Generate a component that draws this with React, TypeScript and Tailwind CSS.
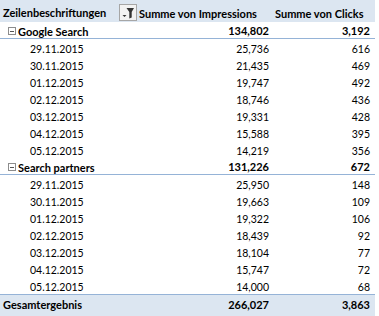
import React from 'react'

type Row = { date: string; imp: string; clicks: string }

const groups: { name: string; imp: string; clicks: string; rows: Row[] }[] = [
  {
    name: 'Google Search',
    imp: '134,802',
    clicks: '3,192',
    rows: [
      { date: '29.11.2015', imp: '25,736', clicks: '616' },
      { date: '30.11.2015', imp: '21,435', clicks: '469' },
      { date: '01.12.2015', imp: '19,747', clicks: '492' },
      { date: '02.12.2015', imp: '18,746', clicks: '436' },
      { date: '03.12.2015', imp: '19,331', clicks: '428' },
      { date: '04.12.2015', imp: '15,588', clicks: '395' },
      { date: '05.12.2015', imp: '14,219', clicks: '356' },
    ],
  },
  {
    name: 'Search partners',
    imp: '131,226',
    clicks: '672',
    rows: [
      { date: '29.11.2015', imp: '25,950', clicks: '148' },
      { date: '30.11.2015', imp: '19,663', clicks: '109' },
      { date: '01.12.2015', imp: '19,322', clicks: '106' },
      { date: '02.12.2015', imp: '18,439', clicks: '92' },
      { date: '03.12.2015', imp: '18,104', clicks: '77' },
      { date: '04.12.2015', imp: '15,747', clicks: '72' },
      { date: '05.12.2015', imp: '14,000', clicks: '68' },
    ],
  },
]

function FilterButton() {
  return (
    <div className="w-[18px] h-[17px] border border-[#a6a6a6] bg-[#f2f2f2] flex items-center justify-center">
      <svg width="16" height="15" viewBox="0 0 16 15">
        <polygon points="6.5,3 14,3 11.7,7 11.7,12.5 9.3,13.5 9.3,7" fill="#333" />
        <polygon points="2.5,10 6.5,10 4.5,12" fill="#333" />
      </svg>
    </div>
  )
}

function MinusBox() {
  return (
    <span className="inline-flex w-[8px] h-[8px] border border-[#8c8c8c] bg-white items-center justify-center mr-[2px]">
      <span className="w-[4px] h-[1px] bg-[#555]" />
    </span>
  )
}

export default function App() {
  return (
    <div className="w-[379px] h-[316px] bg-white text-black text-[10.5px] font-['Lato','Liberation_Sans',sans-serif]">
      <div className="w-[375px]">
        {/* Header */}
        <div className="flex h-[22px] bg-[#dce6f1] font-bold text-[11px] whitespace-nowrap">
          <div className="w-[137px] flex items-center justify-between pl-[3px] pt-[2px]">
            <span className="leading-none">Zeilenbeschriftungen</span>
            <FilterButton />
          </div>
          <div className="w-[135px] flex items-center pl-[2px] pt-[4px] leading-none">Summe von Impressions</div>
          <div className="flex-1 flex items-center pl-[3px] pt-[4px] leading-none">Summe von Clicks</div>
        </div>

        {groups.map((g) => (
          <div key={g.name}>
            <div className="flex h-[17px] border-b border-[#95b3d7] font-bold text-[11px]">
              <div className="w-[137px] flex items-center pl-[8px] pt-[2px] leading-none">
                <MinusBox />
                {g.name}
              </div>
              <div className="w-[135px] text-right pr-[3px] pt-[2px] leading-[14px]">{g.imp}</div>
              <div className="flex-1 text-right pr-[5px] pt-[2px] leading-[14px]">{g.clicks}</div>
            </div>
            {g.rows.map((r) => (
              <div key={r.date} className="flex h-[17px]">
                <div className="w-[137px] pl-[30px] pt-[3px] leading-[14px]">{r.date}</div>
                <div className="w-[135px] text-right pr-[3px] pt-[3px] leading-[14px]">{r.imp}</div>
                <div className="flex-1 text-right pr-[5px] pt-[3px] leading-[14px]">{r.clicks}</div>
              </div>
            ))}
          </div>
        ))}

        {/* Total */}
        <div className="flex h-[22px] bg-[#dce6f1] border-t border-[#95b3d7] font-bold text-[11px] items-center pb-[3px]">
          <div className="w-[137px] pl-[3px] leading-none">Gesamtergebnis</div>
          <div className="w-[135px] text-right pr-[3px] leading-none">266,027</div>
          <div className="flex-1 text-right pr-[5px] leading-none">3,863</div>
        </div>
      </div>
    </div>
  )
}
